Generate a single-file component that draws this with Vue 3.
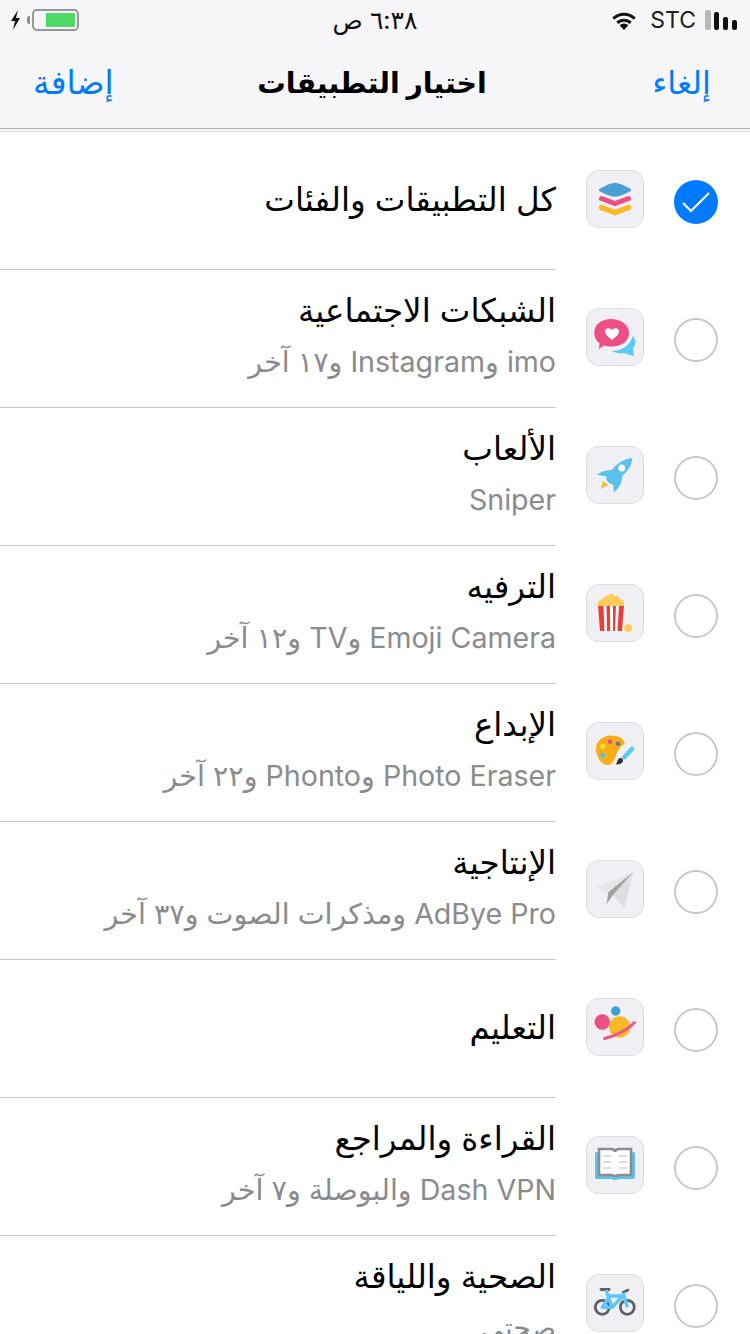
<template>
  <div class="screen">
    <header class="top">
      <div class="status">
        <div class="status-left">
          <svg class="bolt" width="11" height="20" viewBox="0 0 11 20"><path d="M8 0 1 11h4l-2 9 7-12H6z" fill="#111" /></svg>
          <span class="batt-nub"></span>
          <span class="batt"><span class="batt-fill"></span></span>
        </div>
        <div class="clock" dir="rtl">٦:٣٨ ص</div>
        <div class="status-right">
          <svg class="wifi" width="28" height="20" viewBox="1 0 26 20">
            <path d="M14 20 9.600 15.200a6.300 6.300 0 0 1 8.800 0z" fill="#111" />
            <path d="M7.300 12.900a9.600 9.600 0 0 1 13.400 0" fill="none" stroke="#111" stroke-width="3" />
            <path d="M3.300 8.600a15.400 15.400 0 0 1 21.400 0" fill="none" stroke="#111" stroke-width="3" />
          </svg>
          <span class="carrier">STC</span>
          <span class="signal">
            <i class="bar off b1"></i><i class="bar b2"></i><i class="bar b3"></i><i class="bar b4"></i>
          </span>
        </div>
      </div>
      <nav class="nav">
        <span class="nav-btn add">إضافة</span>
        <span class="nav-title">اختيار التطبيقات</span>
        <span class="nav-btn cancel">إلغاء</span>
      </nav>
    </header>
    <div class="header-under"></div>

    <ul class="list" dir="rtl">
      <li v-for="row in rows" :key="row.key" class="row">
        <span class="radio" :class="{ checked: row.checked }">
          <svg v-if="row.checked" width="44" height="44" viewBox="0 0 44 44">
            <path d="M9 23l8 8 18-18" fill="none" stroke="#fff" stroke-width="2.200" />
          </svg>
        </span>
        <span class="icon">
          <svg width="58" height="58" viewBox="0 0 58 58">
            <template v-if="row.key === 'all'">
              <path d="M14 18.500C19 16 24 13 29 12.700c5 .3 10 3.300 15 5.800 1.500 1 1.500 2.200 0 3-5 2.500-10 5.200-15 5.200s-10-2.700-15-5.200c-1.500-.8-1.500-2 0-3z" fill="#4a9fd4" />
              <path d="M15.500 28.500 29 33.500l13.500-5" fill="none" stroke="#ec5083" stroke-width="5" stroke-linecap="round" />
              <path d="M15.500 37.500 29 42.500l13.500-5" fill="none" stroke="#fdb827" stroke-width="5.500" stroke-linecap="round" />
            </template>
            <template v-else-if="row.key === 'social'">
              <path d="M26 43c10 0 18-6 21-15 3 4 3 9 0 12l1 8c-4-1-7-2-10-3-4 1-8 0-12-2z" fill="#5ac8fa" />
              <path d="M8.300 25C8.300 16 16 11 25 11s18 5 18 14-8 13.500-18 13.500c-3 0-5-.5-7-1l-5 3.500.5-6C10.500 33 8.300 29 8.300 25z" fill="#ec5083" />
              <path d="M26 32c-3-2.500-7-5-7-9 0-3 4.500-4 7-1 2.500-3 7-2 7 1 0 4-4 6.500-7 9z" fill="#fff" />
            </template>
            <template v-else-if="row.key === 'games'">
              <path d="M46.300 12C38 13 31 17 26 24c-6 0-11 2-15.300 4.700l9.800 1.800c-.5 2 0 4 1.500 5.500 1.500 1.500 3.500 2.500 5 2.500l1 7.800c5-4 8.500-10 8-16C42 25 46 19 46.300 12z" fill="#5ac0ec" />
              <circle cx="35.700" cy="22" r="3.500" fill="#fff" />
              <path d="M14.700 43l2.600-7.700 5 3.400c-2.500 1-5 2.800-7.600 4.300z" fill="#fdb827" />
            </template>
            <template v-else-if="row.key === 'fun'">
              <path d="M12 21h26l-2 26H14z" fill="#e5413a" />
              <path d="M17.500 21h3l.5 26h-2.500zM24 21h3v26h-2.800zM30 21h3l-1.500 26H29z" fill="#fff" />
              <path d="M12 22c-1-4 2-7 5-7 1-3 3-3.500 5-3 1-3 5-3 6 0 3-1 5 0 5.500 3 3 0 5.500 3 4.500 7z" fill="#fdcb5a" />
              <circle cx="42.300" cy="44" r="4" fill="#fdcb5a" />
            </template>
            <template v-else-if="row.key === 'create'">
              <path d="M10 27c0-8 7-13.500 15-13.500 7 0 13 3 14 7.500-4 3-7 7-9 12-1 4-3 9-7 10-7 1-13-8-13-16z" fill="#f9ae17" />
              <circle cx="16.700" cy="24.300" r="2.400" fill="#fde13b" />
              <circle cx="24" cy="19.700" r="2.300" fill="#ec5083" />
              <circle cx="32" cy="21.700" r="2.300" fill="#6f6fa8" />
              <circle cx="16.700" cy="33.300" r="2.500" fill="#5ac0d8" />
              <path d="M46 27 38.500 35" stroke="#5ac8fa" stroke-width="4.500" stroke-linecap="round" />
              <path d="M30 42.500c1-1 1-5.500 4-6.500 2-.5 3.500 1 3 3-.5 2.500-4 3.800-7 3.500z" fill="#333" />
            </template>
            <template v-else-if="row.key === 'work'">
              <path d="M47.300 12 9 28l13.300 4.300z" fill="#e6e6e8" />
              <path d="M47.300 12 27 35l11.300 13z" fill="#dedee0" />
              <path d="M47.300 12 22.300 32.300 20.700 44l6.300-9z" fill="#a2a2a4" />
            </template>
            <template v-else-if="row.key === 'learn'">
              <circle cx="16.300" cy="24" r="7.700" fill="#ec5083" />
              <circle cx="29.700" cy="13" r="4.700" fill="#3d9fd8" />
              <circle cx="33.700" cy="29" r="10.700" fill="#fdb827" />
              <path d="M18.500 40.500C27 38.500 41 33 48.500 24.500" fill="none" stroke="#e95a8c" stroke-width="3" stroke-linecap="round" />
            </template>
            <template v-else-if="row.key === 'read'">
              <path d="M9 16.300h40V41a2 2 0 0 1-2 2H32l-1 1h-4l-1-1H11a2 2 0 0 1-2-2z" fill="#5ac0ec" />
              <path d="M13 13h12c2 0 4 1 4 3 0-2 2-3 4-3h12v26H33c-2 0-4 1-4 2 0-1-2-2-4-2H13z" fill="#fff" stroke="#8c8c8e" stroke-width="2.600" />
              <path d="M17 20h8M17 26h8M17 32h8M33 20h8M33 26h8M33 32h8" stroke="#dedede" stroke-width="2" />
            </template>
            <template v-else>
              <circle cx="16.300" cy="33.300" r="7" fill="none" stroke="#5f6066" stroke-width="2.800" />
              <circle cx="41.300" cy="33.300" r="7" fill="none" stroke="#5f6066" stroke-width="2.800" />
              <path d="M15 15.500h8" stroke="#5f6066" stroke-width="2.800" stroke-linecap="round" />
              <path d="M37 18.500l5-2.500" stroke="#5f6066" stroke-width="2.600" stroke-linecap="round" />
              <path d="M16.300 33.300 24 22h13L26 33.300H16.300zM20 16l6 17.300M37 18.500l4.300 14.800" fill="none" stroke="#5ac8fa" stroke-width="3.400" stroke-linejoin="round" />
            </template>
          </svg>
        </span>
        <span class="body">
          <span class="title">{{ row.title }}</span>
          <span v-if="row.sub" class="sub">{{ row.sub }}</span>
        </span>
      </li>
    </ul>
  </div>
</template>

<script setup>
// القائمة كما تظهر على الشاشة
const rows = [
  { key: 'all', title: 'كل التطبيقات والفئات', checked: true },
  { key: 'social', title: 'الشبكات الاجتماعية', sub: 'imo وInstagram و١٧ آخر' },
  { key: 'games', title: 'الألعاب', sub: 'Sniper' },
  { key: 'fun', title: 'الترفيه', sub: 'Emoji Camera وTV و١٢ آخر' },
  { key: 'create', title: 'الإبداع', sub: 'Photo Eraser وPhonto و٢٢ آخر' },
  { key: 'work', title: 'الإنتاجية', sub: 'AdBye Pro ومذكرات الصوت و٣٧ آخر' },
  { key: 'learn', title: 'التعليم' },
  { key: 'read', title: 'القراءة والمراجع', sub: 'Dash VPN والبوصلة و٧ آخر' },
  { key: 'health', title: 'الصحية واللياقة', sub: 'صحتي' }
]
</script>

<style>
html, body {
  margin: 0;
  background: #fff;
}
</style>

<style scoped>
.screen {
  width: 750px;
  height: 1334px;
  overflow: hidden;
  background: #fff;
  font-family: "Inter", "DejaVu Sans", sans-serif;
}

.top {
  height: 128px;
  background: #f6f6f8;
  border-bottom: 1px solid #b2b2b6;
}

.header-under {
  height: 2px;
  background: #f4f4f6;
  border-bottom: 1px solid #d9d9de;
}

.status {
  height: 40px;
  display: flex;
  align-items: center;
  justify-content: space-between;
  padding: 0 13px 0 10px;
  position: relative;
  color: #111;
}

.status-left {
  display: flex;
  align-items: center;
}

.bolt {
  margin-right: 6px;
}

.batt-nub {
  width: 3px;
  height: 8px;
  background: #8e8e93;
  border-radius: 2px 0 0 2px;
  margin-right: 2px;
}

.batt {
  width: 47px;
  height: 22px;
  box-sizing: border-box;
  border: 2px solid #97979b;
  border-radius: 5px;
  padding: 2px;
  padding-left: 12px;
  display: flex;
}

.batt-fill {
  flex: 1;
  background: #4cd964;
  border-radius: 1px;
}

.clock {
  position: absolute;
  left: 0;
  right: 0;
  top: 6px;
  text-align: center;
  font-size: 25px;
  line-height: 28px;
}

.status-right {
  display: flex;
  align-items: center;
  gap: 9px;
}

.wifi {
  margin-right: 3px;
}

.carrier {
  font-size: 23px;
  color: #222;
}

.signal {
  display: flex;
  align-items: flex-end;
  gap: 4px;
  height: 20px;
}

.bar {
  width: 5px;
  background: #111;
  border-radius: 2px;
}

.bar.off {
  width: 6px;
  background: #b9b9bb;
  margin-right: -1px;
}

.b1 { height: 20px; }
.b2 { height: 18px; }
.b3 { height: 13px; }
.b4 { height: 10px; }

.nav {
  height: 88px;
  display: grid;
  grid-template-columns: 1fr auto 1fr;
  align-items: center;
  padding: 0 39px 4px 33px;
  box-sizing: border-box;
}

.nav-btn {
  font-size: 33px;
  color: #007aff;
}

.nav-btn.cancel {
  font-size: 32px;
  text-align: right;
}

.nav-title {
  font-size: 28.4px;
  font-weight: 700;
  color: #000;
}

.list {
  list-style: none;
  margin: 0;
  padding: 0;
}

.row {
  height: 138px;
  display: flex;
  align-items: center;
  padding-right: 32px;
}

.radio {
  width: 44px;
  height: 44px;
  box-sizing: border-box;
  border: 2px solid #c7c7cc;
  border-radius: 50%;
  margin-top: 2px;
  flex: none;
}

.radio.checked {
  border: none;
  background: #007aff;
}

.icon {
  width: 58px;
  height: 58px;
  box-sizing: border-box;
  background: #efeff4;
  border: 1px solid #dcdce0;
  border-radius: 13px;
  margin: 0 30px 4px 30px;
  flex: none;
  overflow: hidden;
  display: block;
}

.icon svg {
  display: block;
  margin: -1px;
}

.body {
  flex: 1;
  height: 100%;
  box-sizing: border-box;
  border-bottom: 1px solid #c8c8cc;
  padding-bottom: 2px;
  display: flex;
  flex-direction: column;
  justify-content: center;
  gap: 10px;
}

.title {
  font-size: 32.5px;
  line-height: 44px;
  color: #000;
}

.sub {
  font-size: 28.6px;
  line-height: 38px;
  color: #8a8a8f;
  margin-bottom: 6px;
}
</style>
